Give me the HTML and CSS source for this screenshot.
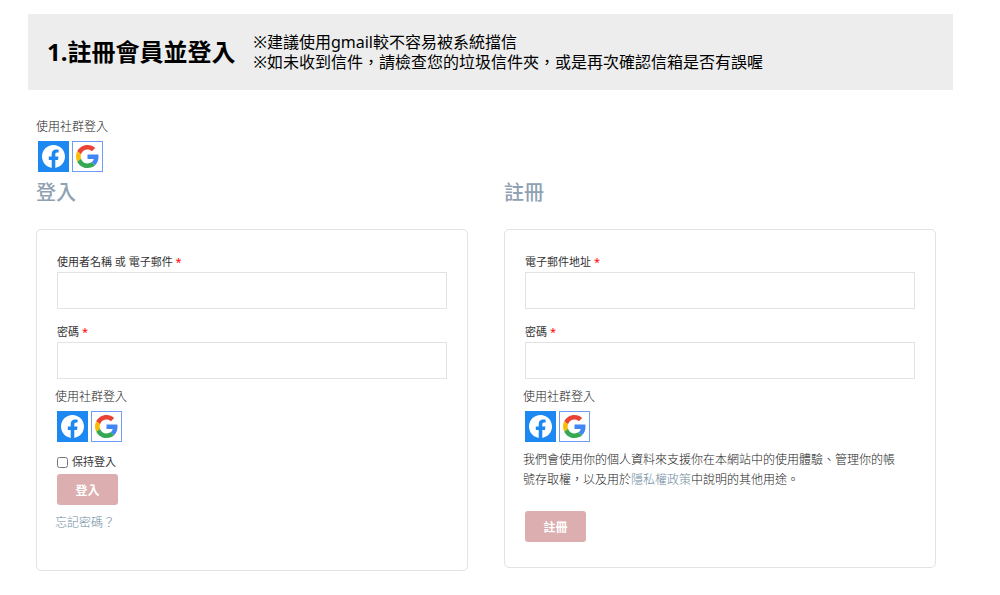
FILE: index.html
```html
<!DOCTYPE html>
<html lang="zh-Hant-TW">
<head>
    <meta charset="UTF-8">
    <meta name="viewport" content="width=device-width, initial-scale=1">
    <title>註冊會員並登入</title>
    <link rel="stylesheet" href="styles.css">
</head>
<body>
    <svg class="sprite" aria-hidden="true">
        <symbol id="icon-facebook" viewBox="0 0 24 24">
            <path fill="#fff" d="M24 12.073c0-6.627-5.373-12-12-12s-12 5.373-12 12c0 5.99 4.388 10.954 10.125 11.854v-8.385H7.078v-3.47h3.047V9.43c0-3.007 1.792-4.669 4.533-4.669 1.312 0 2.686.235 2.686.235v2.953H15.83c-1.491 0-1.956.925-1.956 1.874v2.25h3.328l-.532 3.47h-2.796v8.385C19.612 23.027 24 18.062 24 12.073z"/>
        </symbol>
        <symbol id="icon-google" viewBox="0 0 48 48">
            <path fill="#ea4335" d="M24 9.5c3.54 0 6.71 1.22 9.21 3.6l6.85-6.85C35.9 2.38 30.47 0 24 0 14.62 0 6.51 5.38 2.56 13.22l7.98 6.19C12.43 13.72 17.74 9.5 24 9.5z"/>
            <path fill="#4285f4" d="M46.98 24.55c0-1.57-.15-3.09-.38-4.55H24v9.02h12.94c-.58 2.96-2.26 5.48-4.78 7.18l7.73 6c4.51-4.18 7.09-10.36 7.09-17.65z"/>
            <path fill="#fbbc05" d="M10.53 28.59c-.48-1.45-.76-2.99-.76-4.59s.27-3.14.76-4.59l-7.98-6.19C.92 16.46 0 20.12 0 24s.92 7.54 2.56 10.78l7.97-6.19z"/>
            <path fill="#34a853" d="M24 48c6.48 0 11.93-2.13 15.89-5.81l-7.73-6c-2.15 1.45-4.92 2.3-8.16 2.3-6.26 0-11.57-4.22-13.47-9.91l-7.98 6.19C6.51 42.62 14.62 48 24 48z"/>
        </symbol>
    </svg>

    <header class="banner">
        <h1>1.註冊會員並登入</h1>
        <p>※建議使用gmail較不容易被系統擋信<br>※如未收到信件，請檢查您的垃圾信件夾，或是再次確認信箱是否有誤喔</p>
    </header>

    <main class="account">
        <div class="social">
            <p>使用社群登入</p>
            <div class="social-icons">
                <a href="#facebook" class="facebook" aria-label="Facebook"><svg><use href="#icon-facebook"/></svg></a>
                <a href="#google" class="google" aria-label="Google"><svg><use href="#icon-google"/></svg></a>
            </div>
        </div>

        <div class="columns">
            <section>
                <h2>登入</h2>
                <form class="card login">
                    <div class="field">
                        <label for="username">使用者名稱 或 電子郵件 <span class="required">*</span></label>
                        <input type="text" id="username" name="username" required>
                    </div>
                    <div class="field">
                        <label for="password">密碼 <span class="required">*</span></label>
                        <input type="password" id="password" name="password" required>
                    </div>
                    <div class="social">
                        <p>使用社群登入</p>
                        <div class="social-icons">
                            <a href="#facebook" class="facebook" aria-label="Facebook"><svg><use href="#icon-facebook"/></svg></a>
                            <a href="#google" class="google" aria-label="Google"><svg><use href="#icon-google"/></svg></a>
                        </div>
                    </div>
                    <div class="remember">
                        <input type="checkbox" id="remember" name="remember">
                        <label for="remember">保持登入</label>
                    </div>
                    <button type="submit">登入</button>
                    <p class="lost"><a href="#lost-password">忘記密碼？</a></p>
                </form>
            </section>

            <section>
                <h2>註冊</h2>
                <form class="card register">
                    <div class="field">
                        <label for="reg-email">電子郵件地址 <span class="required">*</span></label>
                        <input type="email" id="reg-email" name="email" required>
                    </div>
                    <div class="field">
                        <label for="reg-password">密碼 <span class="required">*</span></label>
                        <input type="password" id="reg-password" name="reg-password" required>
                    </div>
                    <div class="social">
                        <p>使用社群登入</p>
                        <div class="social-icons">
                            <a href="#facebook" class="facebook" aria-label="Facebook"><svg><use href="#icon-facebook"/></svg></a>
                            <a href="#google" class="google" aria-label="Google"><svg><use href="#icon-google"/></svg></a>
                        </div>
                    </div>
                    <p class="privacy">我們會使用你的個人資料來支援你在本網站中的使用體驗、管理你的帳號存取權，以及用於<a href="#privacy">隱私權政策</a>中說明的其他用途。</p>
                    <button type="submit">註冊</button>
                </form>
            </section>
        </div>
    </main>
</body>
</html>
```
FILE: styles.css
```css
* {
    box-sizing: border-box;
}

body {
    margin: 0;
    padding-top: 14px;
    font-family: "Noto Sans", "Noto Sans CJK TC", sans-serif;
    font-size: 12px;
    font-weight: 300;
    line-height: 20px;
    color: #222;
    background: #fff;
}

h1, h2, p {
    margin: 0;
}

a {
    color: #6d8a9e;
    text-decoration: none;
}

.sprite {
    display: none;
}

.banner {
    display: flex;
    align-items: center;
    gap: 18px;
    min-height: 76px;
    margin: 0 47px 0 28px;
    padding: 0 19px;
    background: #ededed;
    color: #000;
}

.banner h1 {
    font-size: 24px;
    line-height: 32px;
    white-space: nowrap;
}

.banner p {
    font-size: 16px;
    font-weight: 400;
}

.account {
    padding: 27px 64px 24px 36px;
}

.social-icons {
    display: flex;
    gap: 3px;
    padding: 4px 2px 0;
}

.social-icons a {
    display: flex;
    align-items: center;
    justify-content: center;
    width: 31px;
    height: 31px;
    border: 1px solid #1e88f2;
}

.social-icons svg {
    width: 23px;
    height: 23px;
}

.facebook {
    background: #1e88f2;
}

.social-icons .google {
    background: #fff;
    border-color: #6f9cf6;
}

.columns {
    display: grid;
    grid-template-columns: 1fr 1fr;
    gap: 36px;
    align-items: start;
}

h2 {
    margin: 9px 0 24px;
    font-size: 20px;
    line-height: 24px;
    font-weight: 500;
    color: #8fa1b2;
}

.card {
    padding: 22px 18px;
    border: 1px solid #e3e3e3;
    border-radius: 5px;
}

.login {
    padding-bottom: 37px;
}

.register {
    padding-bottom: 23px;
}

.field {
    margin-bottom: 13px;
    padding: 0 2px;
}

.field label, .remember label {
    display: block;
    font-size: 11px;
    font-weight: 400;
    color: #333;
}

.field input {
    display: block;
    width: 100%;
    height: 37px;
    padding: 0 10px;
    border: 1px solid #e3e3e3;
}

.card .field + .social {
    margin-top: -5px;
}

.required {
    color: #f00;
}

.remember {
    display: flex;
    align-items: center;
    gap: 4px;
    margin-top: 10px;
    padding: 0 2px;
}

.remember input {
    width: 11px;
    height: 11px;
    margin: 0;
}

button {
    display: block;
    min-width: 61px;
    height: 31px;
    margin: 2px;
    padding: 0 18px;
    border: 0;
    border-radius: 3px;
    background: #dcaeb0;
    color: #fff;
    font-family: inherit;
    font-size: 12px;
    font-weight: bold;
}

.lost {
    margin-top: 8px;
}

.privacy {
    margin: 8px 0 21px;
    padding-right: 20px;
}
```
